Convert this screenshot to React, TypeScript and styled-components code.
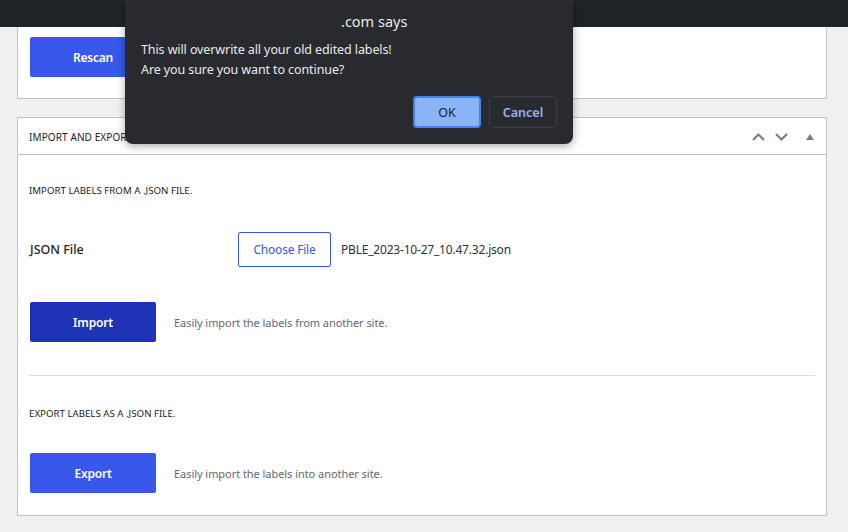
import React from "react";
import styled, { createGlobalStyle } from "styled-components";

const Global = createGlobalStyle`
  html, body { margin: 0; padding: 0; }
  body {
    background: #f0f0f1;
    font-family: "Noto Sans", "Open Sans", sans-serif;
    color: #1d2327;
    width: 848px;
    height: 532px;
    overflow: hidden;
  }
`;

const Page = styled.div`
  position: relative;
  width: 848px;
  height: 532px;
`;

const TopBar = styled.div`
  height: 27px;
  background: #1d2327;
`;

const Content = styled.div`
  padding: 0 21px 0 17px;
  display: flex;
  flex-direction: column;
  gap: 18px;
`;

const Panel = styled.div<{ $cut?: boolean }>`
  background: #fff;
  border: 1px solid #c3c4c7;
  border-top-width: ${(p) => (p.$cut ? 0 : 1)}px;
`;

const RescanBody = styled.div`
  padding: 10px 12px 21px;
`;

const Button = styled.button<{ $dark?: boolean }>`
  width: 126px;
  height: 40px;
  border: none;
  border-radius: 2px;
  background: ${(p) => (p.$dark ? "#1e33b6" : "#3858e9")};
  color: #fff;
  font-family: inherit;
  font-size: 12px;
  font-weight: 600;
  letter-spacing: -0.2px;
  cursor: pointer;
`;

const PanelHeader = styled.div`
  height: 36px;
  border-bottom: 1px solid #c3c4c7;
  display: flex;
  align-items: center;
  padding: 1px 12px 0 11px;
  box-sizing: border-box;
  height: 37px;
`;

const HeaderTitle = styled.div`
  flex: 1;
  font-size: 10px;
  letter-spacing: 0.1px;
  text-transform: uppercase;
`;

const HeaderIcons = styled.div`
  display: flex;
  align-items: center;
  gap: 10px;
  color: #787c82;
`;

const Toggle = styled.span`
  margin-left: 8px;
  display: inline-flex;
`;

const PanelBody = styled.div`
  padding: 0 11px 22px;
`;

const SectionTitle = styled.div<{ $top: number }>`
  margin-top: ${(p) => p.$top}px;
  font-size: 9.7px;
  line-height: 14px;
  text-transform: uppercase;
`;

const FormRow = styled.div`
  margin-top: 34px;
  display: flex;
  align-items: center;
  height: 34px;
`;

const FieldLabel = styled.div`
  width: 208px;
  font-size: 12.5px;
  font-weight: 500;
  padding-left: 1px;
`;

const FileButton = styled.button`
  height: 35px;
  width: 93px;
  background: #fff;
  border: 1px solid #3858e9;
  border-radius: 2px;
  color: #3858e9;
  font-family: inherit;
  font-size: 12px;
  letter-spacing: -0.2px;
  padding: 0;
`;

const FileName = styled.span`
  margin-left: 10px;
  font-size: 12px;
  letter-spacing: -0.2px;
  color: #2c3338;
`;

const ActionRow = styled.div<{ $top: number }>`
  margin-top: ${(p) => p.$top}px;
  display: flex;
  align-items: center;
  gap: 18px;
  padding-left: 1px;
`;

const Hint = styled.span`
  font-size: 11px;
  letter-spacing: -0.05px;
  color: #646970;
`;

const Separator = styled.hr`
  margin: 33px 0 0;
  border: none;
  border-top: 1px solid #dcdcde;
`;

const Dialog = styled.div`
  position: absolute;
  left: 125px;
  top: 0;
  width: 448px;
  height: 144px;
  box-sizing: border-box;
  background: #292a2d;
  border-radius: 0 0 8px 8px;
  box-shadow: 0 2px 8px rgba(0, 0, 0, 0.35);
  color: #e8eaed;
  display: flex;
  flex-direction: column;
  padding: 0 16px 16px;
`;

const DialogTitle = styled.div`
  font-size: 14.5px;
  line-height: 20px;
  margin-top: 11px;
  padding-left: 200px;
`;

const DialogMessage = styled.div`
  margin-top: 9px;
  font-size: 12.5px;
  letter-spacing: -0.1px;
  line-height: 20px;
`;

const DialogActions = styled.div`
  margin-top: auto;
  display: flex;
  justify-content: flex-end;
  gap: 8px;
`;

const DialogButton = styled.button<{ $primary?: boolean }>`
  width: 68px;
  height: 32px;
  box-sizing: border-box;
  border-radius: 4px;
  font-family: inherit;
  font-size: 12.5px;
  font-weight: ${(p) => (p.$primary ? 400 : 600)};
  background: ${(p) => (p.$primary ? "#8ab4f8" : "transparent")};
  color: ${(p) => (p.$primary ? "#202124" : "#8ab4f8")};
  border: ${(p) => (p.$primary ? "2px solid #3f82f0" : "1px solid #3c4043")};
  padding: 0;
`;

const Chevron = ({ up }: { up?: boolean }) => (
  <svg width="13" height="8" viewBox="0 0 13 8">
    <path
      d={up ? "M1 7 L6.5 1.5 L12 7" : "M1 1 L6.5 6.5 L12 1"}
      fill="none"
      stroke="currentColor"
      strokeWidth="2"
    />
  </svg>
);

export default function App() {
  return (
    <Page>
      <Global />
      <TopBar />
      <Content>
        <Panel $cut>
          <RescanBody>
            <Button>Rescan</Button>
          </RescanBody>
        </Panel>
        <Panel>
          <PanelHeader>
            <HeaderTitle>Import and Export</HeaderTitle>
            <HeaderIcons>
              <Chevron up />
              <Chevron />
              <Toggle>
                <svg width="8" height="6" viewBox="0 0 8 6">
                  <path d="M4 0 L8 6 L0 6 Z" fill="currentColor" />
                </svg>
              </Toggle>
            </HeaderIcons>
          </PanelHeader>
          <PanelBody>
            <SectionTitle $top={29}>Import labels from a .json file.</SectionTitle>
            <FormRow>
              <FieldLabel>JSON File</FieldLabel>
              <FileButton>Choose File</FileButton>
              <FileName>PBLE_2023-10-27_10.47.32.json</FileName>
            </FormRow>
            <ActionRow $top={36}>
              <Button $dark>Import</Button>
              <Hint>Easily import the labels from another site.</Hint>
            </ActionRow>
            <Separator />
            <SectionTitle $top={31}>Export labels as a .json file.</SectionTitle>
            <ActionRow $top={32}>
              <Button>Export</Button>
              <Hint>Easily import the labels into another site.</Hint>
            </ActionRow>
          </PanelBody>
        </Panel>
      </Content>
      <Dialog>
        <DialogTitle>.com says</DialogTitle>
        <DialogMessage>
          This will overwrite all your old edited labels!
          <br />
          Are you sure you want to continue?
        </DialogMessage>
        <DialogActions>
          <DialogButton $primary>OK</DialogButton>
          <DialogButton>Cancel</DialogButton>
        </DialogActions>
      </Dialog>
    </Page>
  );
}
